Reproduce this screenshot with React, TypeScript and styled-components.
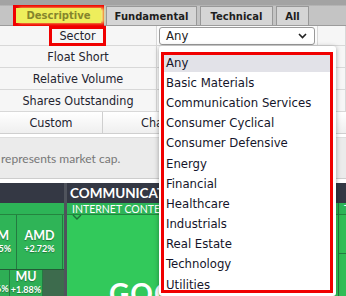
import React from "react";
import styled, { createGlobalStyle } from "styled-components";

const sectors = [
  "Any",
  "Basic Materials",
  "Communication Services",
  "Consumer Cyclical",
  "Consumer Defensive",
  "Energy",
  "Financial",
  "Healthcare",
  "Industrials",
  "Real Estate",
  "Technology",
  "Utilities",
];

const filterRows = ["Float Short", "Relative Volume", "Shares Outstanding"];

const GlobalStyle = createGlobalStyle`
  html, body {
    margin: 0;
    padding: 0;
    background: #fff;
  }
  body {
    width: 346px;
    height: 296px;
    overflow: hidden;
    font-family: "DejaVu Sans Condensed", "DejaVu Sans", sans-serif;
  }
`;

const Page = styled.div`
  position: relative;
  width: 346px;
  height: 296px;
  overflow: hidden;
  background: #fff;
`;

/* ---------- tabs ---------- */

const TabBar = styled.div`
  height: 26px;
  box-sizing: border-box;
  display: flex;
  align-items: flex-end;
  gap: 3px;
  padding-left: 13px;
  background: linear-gradient(#a3a3a3 0, #a3a3a3 5px, #c4c4c4 6px, #c4c4c4 100%);
  border-bottom: 1px solid #9c9c9c;
`;

const Tab = styled.div<{ $w: number }>`
  width: ${(p) => p.$w}px;
  height: 19px;
  box-sizing: border-box;
  display: flex;
  align-items: center;
  justify-content: center;
  background: #d5d5d5;
  border: 1px solid #989898;
  border-bottom: none;
  font-family: "DejaVu Sans", sans-serif;
  font-weight: 700;
  font-size: 10px;
  color: #1e1e1e;
`;

const ActiveMark = styled.div`
  width: 91px;
  height: 21px;
  box-sizing: border-box;
  border: 3px solid #f00000;
  margin-right: -1px;
  margin-bottom: -1px;
  display: flex;
`;

const ActiveTab = styled.div`
  flex: 1;
  display: flex;
  align-items: center;
  justify-content: center;
  background: #eeee5c;
  box-shadow: 3px 0 3px #f4f47a;
  font-family: "DejaVu Sans", sans-serif;
  font-weight: 700;
  font-size: 10px;
  color: #85852c;
`;

/* ---------- filter grid ---------- */

const FilterGrid = styled.div`
  display: grid;
  grid-template-columns: 157px 161px 1fr;
  background: #f6f6f6;
`;

const LabelCell = styled.div<{ $h: number }>`
  height: ${(p) => p.$h}px;
  box-sizing: border-box;
  display: flex;
  align-items: center;
  justify-content: center;
  border-bottom: 1px solid #d8d8d8;
  border-right: 1px solid #d8d8d8;
  font-size: 12.5px;
  color: #23232f;
  white-space: nowrap;
`;

const ValueCell = styled.div<{ $h: number }>`
  height: ${(p) => p.$h}px;
  box-sizing: border-box;
  display: flex;
  align-items: center;
  padding: 0 2px;
  border-bottom: 1px solid #d8d8d8;
  border-right: 1px solid #d8d8d8;
  background: #fbfbfb;
`;

const SectorMark = styled.div`
  width: 57px;
  height: 20px;
  box-sizing: border-box;
  border: 3px solid #f00000;
  display: flex;
  align-items: center;
  justify-content: center;
  margin-right: 1px;
`;

const SelectBox = styled.div`
  flex: 1;
  height: 18px;
  box-sizing: border-box;
  display: flex;
  align-items: center;
  justify-content: space-between;
  padding: 0 7px 0 6px;
  background: #fff;
  border: 1px solid #9a9a9a;
  border-radius: 3px;
  font-size: 13px;
  color: #222;
`;

const CustomRow = styled.div`
  display: flex;
  height: 22px;
  box-sizing: border-box;
  border-bottom: 1px solid #cfcfcf;
  background: linear-gradient(#ffffff, #efefef);
`;

const CustomCell = styled.div<{ $w: number }>`
  width: ${(p) => p.$w}px;
  box-sizing: border-box;
  display: flex;
  align-items: center;
  justify-content: center;
  border-right: 1px solid #cfcfcf;
  font-size: 12.5px;
  color: #23232f;
`;

/* ---------- info band ---------- */

const InfoBand = styled.div`
  margin-top: 3px;
  height: 42px;
  box-sizing: border-box;
  display: flex;
  align-items: center;
  padding-left: 1px;
  background: #ebebeb;
  border-top: 1px solid #dedede;
  border-bottom: 1px solid #cdcdcd;
  font-family: Lato, sans-serif;
  font-size: 12px;
  color: #777;
  white-space: nowrap;
`;

/* ---------- treemap ---------- */

const Treemap = styled.div`
  margin-top: 4px;
  height: 114px;
  display: flex;
  gap: 3px;
  background: #4f535c;
  font-family: Lato, sans-serif;
  color: #fff;
`;

const Sector = styled.div<{ $w?: number }>`
  ${(p) => (p.$w ? `width: ${p.$w}px;` : "flex: 1;")}
  display: flex;
  flex-direction: column;
  overflow: hidden;
  background: #343844;
`;

const SectorHead = styled.div`
  height: 20px;
  flex: none;
  padding-left: 3px;
  line-height: 21px;
  font-weight: 700;
  font-size: 13.5px;
  white-space: nowrap;
  overflow: hidden;
`;

const IndustryRow = styled.div`
  flex: 1;
  display: flex;
  gap: 1px;
  background: #247a41;
`;

const Industry = styled.div<{ $w?: number }>`
  ${(p) => (p.$w ? `width: ${p.$w}px;` : "flex: 1;")}
  position: relative;
  display: flex;
  flex-direction: column;
  overflow: hidden;
`;

const IndustryBar = styled.div`
  height: 11px;
  flex: none;
  padding-left: 5px;
  background: #2db457;
  font-size: 10.5px;
  line-height: 12px;
  white-space: nowrap;
  overflow: hidden;
  border-bottom: 1px solid #24843f;
`;

const Chevron = styled.svg`
  position: absolute;
  left: 5px;
  top: 11px;
`;

const TileRow = styled.div<{ $h?: number }>`
  ${(p) => (p.$h ? `height: ${p.$h}px;` : "flex: 1;")}
  display: flex;
  gap: 1px;
  overflow: hidden;
  border-bottom: 1px solid #235c36;
`;

const Tile = styled.div<{ $w?: number; $bg: string; $shift?: number }>`
  ${(p) => (p.$w ? `width: ${p.$w}px; flex: none;` : "flex: 1;")}
  margin-left: ${(p) => p.$shift ?? 0}px;
  display: flex;
  flex-direction: column;
  align-items: center;
  justify-content: center;
  background: ${(p) => p.$bg};
  text-shadow: 0 1px 1px rgba(0, 0, 0, 0.35);
`;

const Ticker = styled.div`
  font-weight: 700;
  font-size: 12.5px;
  line-height: 1;
  min-height: 12px;
`;

const Change = styled.div`
  font-weight: 700;
  font-size: 9px;
  line-height: 1.25;
`;

const BigBody = styled.div`
  flex: 1;
  background: #32c95b;
  padding: 64px 0 0 42px;
`;

const BigTicker = styled.div`
  font-weight: 700;
  font-size: 28px;
  line-height: 28px;
  letter-spacing: 1px;
  white-space: nowrap;
`;

const SideBody = styled.div`
  flex: 1;
  display: flex;
  flex-direction: column;
  gap: 1px;
  background: #247a41;
`;

const SideTile = styled.div<{ $h?: number }>`
  ${(p) => (p.$h ? `height: ${p.$h}px;` : "flex: 1;")}
  background: #30bd56;
`;

/* ---------- dropdown ---------- */

const Dropdown = styled.div`
  position: absolute;
  left: 159px;
  top: 46px;
  width: 177px;
  height: 250px;
  background: #fff;
  border-radius: 3px;
  box-shadow: 0 1px 5px rgba(0, 0, 0, 0.35);
`;

const OptionList = styled.div`
  position: absolute;
  left: 5px;
  top: 6px;
  width: 166px;
`;

const Option = styled.div<{ $active?: boolean }>`
  height: 20.2px;
  display: flex;
  align-items: center;
  padding-left: 2px;
  background: ${(p) => (p.$active ? "#e2e2e8" : "transparent")};
  font-size: 13px;
  color: #15152a;
  white-space: nowrap;
`;

const RedFrame = styled.div`
  position: absolute;
  left: 2px;
  top: 6px;
  width: 172px;
  height: 241px;
  box-sizing: border-box;
  border: 3px solid #f00000;
  pointer-events: none;
`;

const ChevronDown = () => (
  <svg width="9" height="6" viewBox="0 0 9 6">
    <path d="M1 1l3.5 3.5L8 1" fill="none" stroke="#222" strokeWidth="1.6" />
  </svg>
);

export default function App() {
  return (
    <Page>
      <GlobalStyle />
      <TabBar>
        <ActiveMark>
          <ActiveTab>Descriptive</ActiveTab>
        </ActiveMark>
        <Tab $w={91}>Fundamental</Tab>
        <Tab $w={73}>Technical</Tab>
        <Tab $w={33}>All</Tab>
      </TabBar>

      <FilterGrid>
        <LabelCell $h={20}>
          <SectorMark>Sector</SectorMark>
        </LabelCell>
        <ValueCell $h={20}>
          <SelectBox>
            <span>Any</span>
            <ChevronDown />
          </SelectBox>
        </ValueCell>
        <LabelCell $h={20} />
        {filterRows.map((label) => (
          <React.Fragment key={label}>
            <LabelCell $h={22}>{label}</LabelCell>
            <ValueCell $h={22} />
            <LabelCell $h={22} />
          </React.Fragment>
        ))}
      </FilterGrid>

      <CustomRow>
        <CustomCell $w={103}>Custom</CustomCell>
        <CustomCell $w={114}>Charts</CustomCell>
        <CustomCell $w={103} />
      </CustomRow>

      <InfoBand>represents market cap.</InfoBand>

      <Treemap>
        <Sector $w={64}>
          <SectorHead />
          <IndustryRow>
            <Industry>
              <IndustryBar />
              <TileRow $h={54}>
                <Tile $w={40} $shift={-24} $bg="#2fb457">
                  <Ticker>TSM</Ticker>
                  <Change>+0.95%</Change>
                </Tile>
                <Tile $w={45} $bg="#2fb457">
                  <Ticker>AMD</Ticker>
                  <Change>+2.72%</Change>
                </Tile>
                <Tile $bg="#2fb457" />
              </TileRow>
              <TileRow>
                <Tile $w={31} $shift={-22} $bg="#2eae55">
                  <Ticker />
                  <Change>+1.46%</Change>
                </Tile>
                <Tile $w={32} $bg="#2eae55">
                  <Ticker>MU</Ticker>
                  <Change>+1.88%</Change>
                </Tile>
                <Tile $bg="#3d6b4d" />
              </TileRow>
            </Industry>
          </IndustryRow>
        </Sector>
        <Sector>
          <SectorHead>COMMUNICATION SERVICES</SectorHead>
          <IndustryRow>
            <Industry>
              <IndustryBar>INTERNET CONTENT &amp; INFORMATION</IndustryBar>
              <Chevron width="10" height="7" viewBox="0 0 10 7">
                <path d="M1 1l4 4 4-4" fill="none" stroke="#1f6e3a" strokeWidth="1.4" />
              </Chevron>
              <BigBody>
                <BigTicker>GOOGL</BigTicker>
              </BigBody>
            </Industry>
            <Industry $w={7}>
              <IndustryBar>T</IndustryBar>
              <SideBody>
                <SideTile $h={38} />
                <SideTile />
              </SideBody>
            </Industry>
          </IndustryRow>
        </Sector>
      </Treemap>

      <Dropdown>
        <OptionList>
          {sectors.map((s, i) => (
            <Option key={s} $active={i === 0}>
              {s}
            </Option>
          ))}
        </OptionList>
        <RedFrame />
      </Dropdown>
    </Page>
  );
}
